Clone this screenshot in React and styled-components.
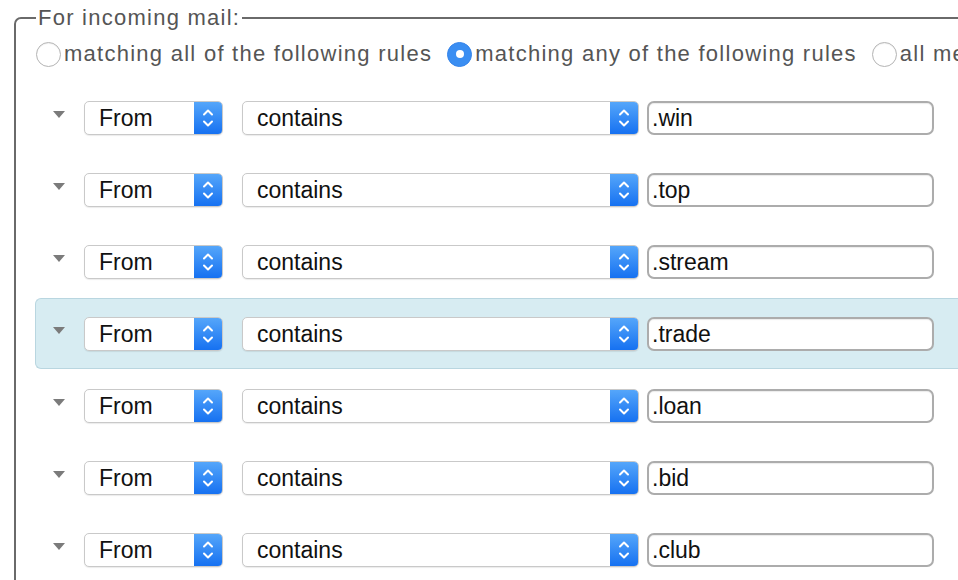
import React from 'react';
import styled, { createGlobalStyle } from 'styled-components';

const GlobalStyle = createGlobalStyle`
  body {
    margin: 0;
    background: #ffffff;
    overflow: hidden;
    font-family: "Liberation Sans", Arial, sans-serif;
  }
`;

const Page = styled.div`
  width: 958px;
  height: 580px;
  overflow: hidden;
  background: #fff;
`;

const Fieldset = styled.fieldset`
  margin: 4px 0 0 14px;
  width: 1060px;
  height: 700px;
  box-sizing: border-box;
  border: 2px solid #6a6a6a;
  border-radius: 7px 0 0 0;
  padding: 10px 0 0 20px;
`;

const Legend = styled.legend`
  padding: 0 2px;
  font-size: 22px;
  line-height: 27px;
  letter-spacing: 1.25px;
  color: #555;
`;

const RadioRow = styled.div`
  display: flex;
  align-items: center;
  height: 26px;
  white-space: nowrap;
`;

const RadioOption = styled.label`
  display: flex;
  align-items: center;
  margin-right: 15px;
  font-size: 22px;
  letter-spacing: 1.26px;
  color: #555;
`;

const RadioCircle = styled.span`
  width: 25px;
  height: 25px;
  border-radius: 50%;
  box-sizing: border-box;
  margin-right: 3px;
  display: flex;
  align-items: center;
  justify-content: center;
  background: ${p => (p.$checked ? '#3a8ef2' : '#fff')};
  border: 1px solid ${p => (p.$checked ? '#3584ea' : '#b4b4b4')};
  box-shadow: ${p => (p.$checked ? 'none' : 'inset 0 1px 1px rgba(0,0,0,0.06)')};

  &::after {
    content: '';
    display: ${p => (p.$checked ? 'block' : 'none')};
    width: 8px;
    height: 8px;
    border-radius: 50%;
    background: #fff;
  }
`;

const RuleList = styled.div`
  margin: 15px 0 0 -1px;
  display: flex;
  flex-direction: column;
  gap: 1px;
`;

const RuleRow = styled.div`
  display: flex;
  align-items: center;
  height: 71px;
  box-sizing: border-box;
  padding: 1px 0 0 17px;
  border: 1px solid ${p => (p.$selected ? '#b9d6e0' : 'transparent')};
  border-right: none;
  border-radius: 6px 0 0 6px;
  background: ${p => (p.$selected ? '#d7ecf2' : 'transparent')};
`;

const Disclosure = styled.span`
  width: 0;
  height: 0;
  border-left: 6px solid transparent;
  border-right: 6px solid transparent;
  border-top: 7px solid #7b7b7b;
  margin: 0 19px 8px 0;
`;

const Popup = styled.div`
  display: flex;
  width: ${p => p.$width}px;
  height: 34px;
  box-sizing: border-box;
  margin-right: ${p => p.$gap}px;
  border: 1px solid #c9c9c9;
  border-radius: 5px;
  background: #fff;
  box-shadow: 0 1px 1px rgba(0, 0, 0, 0.08);
  overflow: hidden;
`;

const PopupLabel = styled.span`
  flex: 1;
  padding-left: 14px;
  font-size: 23px;
  line-height: 33px;
  color: #111;
`;

const PopupArrows = styled.span`
  width: 28px;
  display: flex;
  align-items: center;
  justify-content: center;
  background: linear-gradient(#55a6fa, #1671f1);
`;

const TextField = styled.div`
  width: 287px;
  height: 34px;
  box-sizing: border-box;
  border: 2px solid #acacac;
  border-radius: 7px;
  background: #fff;
  box-shadow: inset 0 1px 1px rgba(0, 0, 0, 0.08);
  padding-left: 3px;
  font-size: 23px;
  line-height: 30px;
  color: #111;
`;

const Chevrons = () => (
  <svg width="14" height="24" viewBox="0 0 14 24" fill="none" stroke="#fff" strokeWidth="2" strokeLinecap="round" strokeLinejoin="round">
    <path d="M3 8.5 L7 4.5 L11 8.5" />
    <path d="M3 15.5 L7 19.5 L11 15.5" />
  </svg>
);

const rules = ['.win', '.top', '.stream', '.trade', '.loan', '.bid', '.club'];

export default function App() {
  return (
    <Page>
      <GlobalStyle />
      <Fieldset>
        <Legend>For incoming mail:</Legend>
        <RadioRow>
          <RadioOption>
            <RadioCircle />
            matching all of the following rules
          </RadioOption>
          <RadioOption>
            <RadioCircle $checked />
            matching any of the following rules
          </RadioOption>
          <RadioOption>
            <RadioCircle />
            all messages
          </RadioOption>
        </RadioRow>
        <RuleList>
          {rules.map((value, i) => (
            <RuleRow key={value} $selected={i === 3}>
              <Disclosure />
              <Popup $width={139} $gap={19}>
                <PopupLabel>From</PopupLabel>
                <PopupArrows><Chevrons /></PopupArrows>
              </Popup>
              <Popup $width={397} $gap={8}>
                <PopupLabel>contains</PopupLabel>
                <PopupArrows><Chevrons /></PopupArrows>
              </Popup>
              <TextField>{value}</TextField>
            </RuleRow>
          ))}
        </RuleList>
      </Fieldset>
    </Page>
  );
}
